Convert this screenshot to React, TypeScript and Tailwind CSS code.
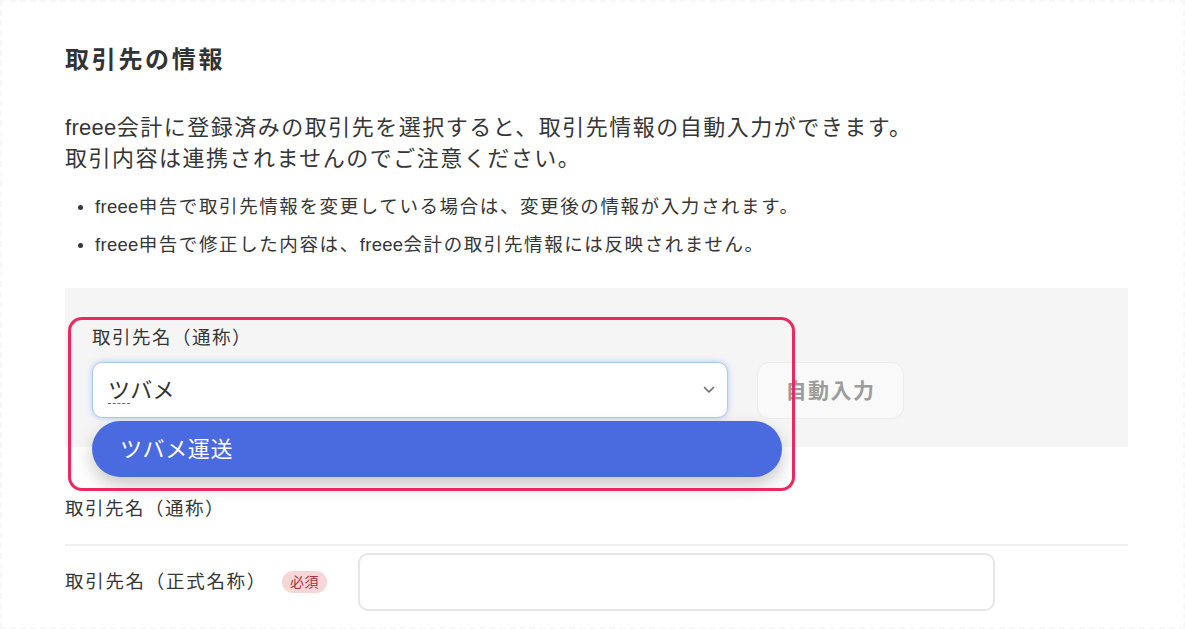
import React from "react";

function F() {
  return <span className="tracking-[0.3px]">freee</span>;
}

export default function App() {
  return (
    <div className="relative min-h-[629px] w-full overflow-hidden bg-white font-['Liberation_Sans','Noto_Sans_CJK_JP',sans-serif] text-[#333333]">
      <div className="pointer-events-none absolute inset-0 border-2 border-dashed border-[#f7f7f7]" />
      <div className="pl-[65px] pr-[57px] pt-[46px]">
        <h2 className="h-[28px] text-[24px] font-bold leading-[28px] tracking-[2.7px] text-[#333333]">
          取引先の情報
        </h2>
        <p className="mt-[38px] text-[22px] leading-[31px] tracking-[1.5px] text-[#363636]">
          <F />会計に登録済みの取引先を選択すると、取引先情報の自動入力ができます。
          <br />
          取引内容は連携されませんのでご注意ください。
        </p>
        <ul className="mt-[18px] flex flex-col gap-[8px]">
          <li className="flex h-[30px] items-center text-[18.5px] tracking-[1.6px] text-[#363636]">
            <span className="ml-[13px] mr-[12px] h-[5px] w-[5px] rounded-full bg-[#363636]" />
            <span>
              <F />申告で取引先情報を変更している場合は、変更後の情報が入力されます。
            </span>
          </li>
          <li className="flex h-[30px] items-center text-[18.5px] tracking-[1.6px] text-[#363636]">
            <span className="ml-[13px] mr-[12px] h-[5px] w-[5px] rounded-full bg-[#363636]" />
            <span>
              <F />申告で修正した内容は、<F />会計の取引先情報には反映されません。
            </span>
          </li>
        </ul>

        <div className="mt-[28px] bg-[#f6f5f5] pb-[28px] pl-[27px] pt-[38px]">
          <div className="h-[24px] text-[18.5px] leading-[24px] tracking-[1.5px] text-[#363636]">
            取引先名（通称）
          </div>
          <div className="mt-[12px] flex items-start gap-[29px]">
            <div className="relative">
              <div className="flex h-[56px] w-[636px] items-center justify-between rounded-[10px] border border-[#a9c9ef] bg-white pl-[15px] pr-[12px] shadow-[0_0_6px_rgba(90,150,230,0.45)]">
                <span className="text-[22px] tracking-[0.3px] text-[#333333]">
                  <span className="border-b border-dashed border-[#666666]">ツ</span>バメ
                </span>
                <svg width="12" height="8" viewBox="0 0 12 8" fill="none">
                  <path d="M1.5 1.5 L6 6 L10.5 1.5" stroke="#6b6b6b" strokeWidth="1.6" strokeLinecap="round" strokeLinejoin="round" />
                </svg>
              </div>
              <div className="absolute left-0 top-[59px] z-10 flex h-[56px] w-[690px] items-center rounded-full bg-[#4a6ae0] pl-[28px] text-[22px] tracking-[0.6px] text-white shadow-[0_8px_18px_rgba(0,0,0,0.22)]">
                ツバメ運送
              </div>
            </div>
            <button className="flex h-[57px] w-[147px] items-center justify-center rounded-[12px] border border-[#ebebeb] bg-[#f9f9f9] text-[21px] font-bold tracking-[1.5px] text-[#9c9c9c]">
              自動入力
            </button>
          </div>
        </div>

        <div className="border-b-2 border-[#efefef] pb-[23px] pt-[50px]">
          <div className="h-[24px] text-[18.5px] leading-[24px] tracking-[1.5px] text-[#363636]">
            取引先名（通称）
          </div>
        </div>

        <div className="flex items-center pt-[7px]">
          <div className="flex w-[293px] items-center">
            <span className="text-[18.5px] tracking-[1.7px] text-[#363636]">取引先名（正式名称）</span>
            <span className="ml-[15px] flex h-[22px] items-center rounded-full bg-[#f6d6d9] px-[8px] text-[14px] tracking-[0.5px] text-[#a8323c]">
              必須
            </span>
          </div>
          <div className="h-[58px] w-[637px] rounded-[10px] border-2 border-[#e6e6e6] bg-white" />
        </div>
      </div>

      <div className="pointer-events-none absolute left-[68px] top-[317px] z-20 h-[174px] w-[727px] rounded-[14px] border-[3px] border-[#ec2860]" />
    </div>
  );
}
